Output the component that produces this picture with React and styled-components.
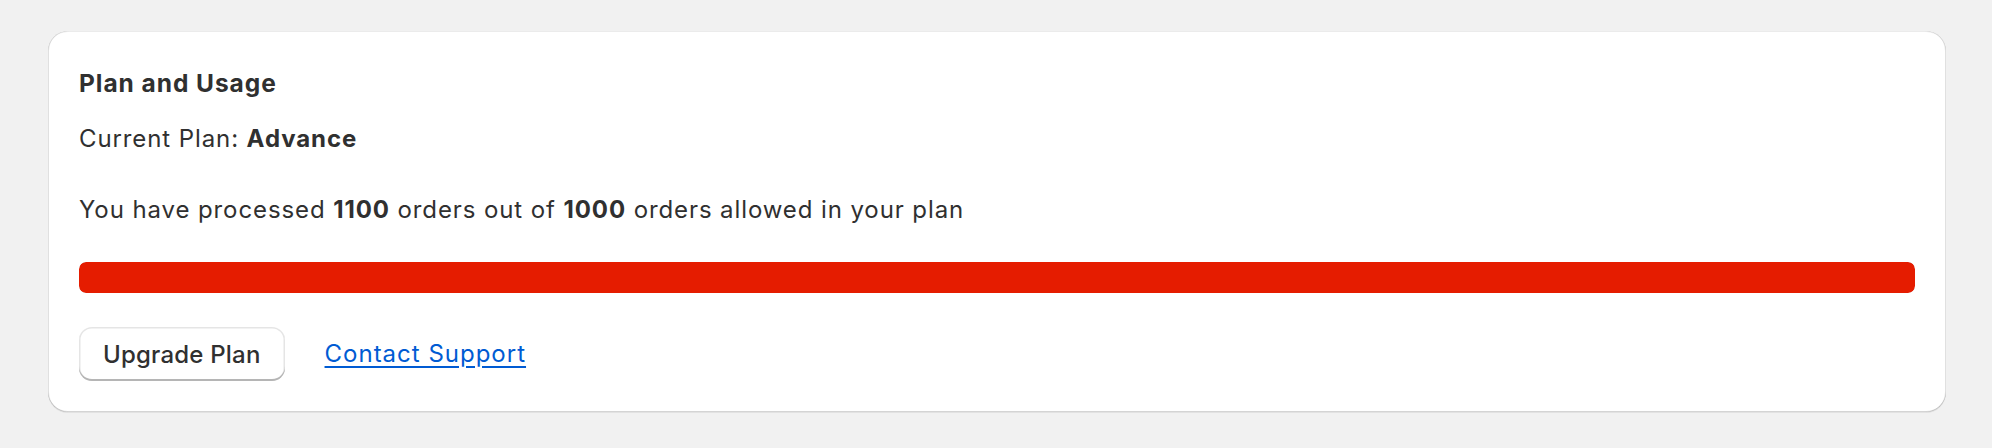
import React from "react";
import styled, { createGlobalStyle } from "styled-components";

const usage = { plan: "Advance", processed: 1100, allowed: 1000 };

export default function App() {
  const percent = Math.min(100, (usage.processed / usage.allowed) * 100);
  const over = usage.processed >= usage.allowed;

  return (
    <>
      <GlobalStyle />
      <Page>
        <Card>
          <Heading>Plan and Usage</Heading>
          <Text>
            Current Plan: <strong>{usage.plan}</strong>
          </Text>
          <UsageText>
            You have processed <strong>{usage.processed}</strong> orders out of{" "}
            <strong>{usage.allowed}</strong> orders allowed in your plan
          </UsageText>
          <Track>
            <Fill $over={over} style={{ width: `${percent}%` }} />
          </Track>
          <Actions>
            <Button type="button">Upgrade Plan</Button>
            <SupportLink href="#">Contact Support</SupportLink>
          </Actions>
        </Card>
      </Page>
    </>
  );
}

const GlobalStyle = createGlobalStyle`
  html, body {
    margin: 0;
    padding: 0;
    background: #f1f1f1;
  }
  body {
    font-family: Inter, "Noto Sans", sans-serif;
    color: #303030;
  }
`;

const Page = styled.main`
  padding: 31px 46px 36px 48px;
  background: #f1f1f1;
`;

const Card = styled.section`
  display: flex;
  flex-direction: column;
  align-items: flex-start;
  padding: 35px 31px 31px;
  background: #ffffff;
  border-radius: 20px;
  box-shadow: 0 1px 0 0 rgba(26, 26, 26, 0.07),
    inset 0 1px 0 0 rgba(0, 0, 0, 0.08), inset 0 -1px 0 0 rgba(0, 0, 0, 0.17),
    inset 1px 0 0 0 rgba(0, 0, 0, 0.12), inset -1px 0 0 0 rgba(0, 0, 0, 0.12);
`;

const Heading = styled.h2`
  margin: 0;
  font-size: 24.5px;
  line-height: 34px;
  font-weight: 650;
  letter-spacing: 0.95px;
`;

const Text = styled.p`
  margin: 22px 0 0;
  font-size: 24px;
  line-height: 34px;
  font-weight: 400;
  letter-spacing: 0.9px;

  strong {
    font-weight: 650;
  }
`;

const UsageText = styled(Text)`
  margin-top: 37px;
`;

const Track = styled.div`
  align-self: stretch;
  margin-top: 35px;
  height: 31px;
  border-radius: 7px;
  background: #e3e3e3;
  overflow: hidden;
`;

const Fill = styled.div`
  height: 100%;
  border-radius: 7px;
  background: ${({ $over }) => ($over ? "#e51c00" : "#29845a")};
`;

const Actions = styled.div`
  display: flex;
  align-items: center;
  gap: 40px;
  margin-top: 34px;
`;

const Button = styled.button`
  height: 54px;
  padding: 0 24px;
  border: none;
  border-radius: 13px;
  background: #ffffff;
  color: #303030;
  font-family: Inter, "Noto Sans", sans-serif;
  font-size: 24px;
  font-weight: 550;
  letter-spacing: 0.2px;
  cursor: pointer;
  box-shadow: inset 0 -2px 0 0 #b5b5b5, inset 0 0 0 1.5px rgba(0, 0, 0, 0.1),
    inset 0 1px 0 2px #ffffff;
`;

const SupportLink = styled.a`
  color: #005bd3;
  font-size: 24px;
  line-height: 34px;
  letter-spacing: 1px;
  text-decoration: underline;
  text-underline-offset: 4px;
`;
